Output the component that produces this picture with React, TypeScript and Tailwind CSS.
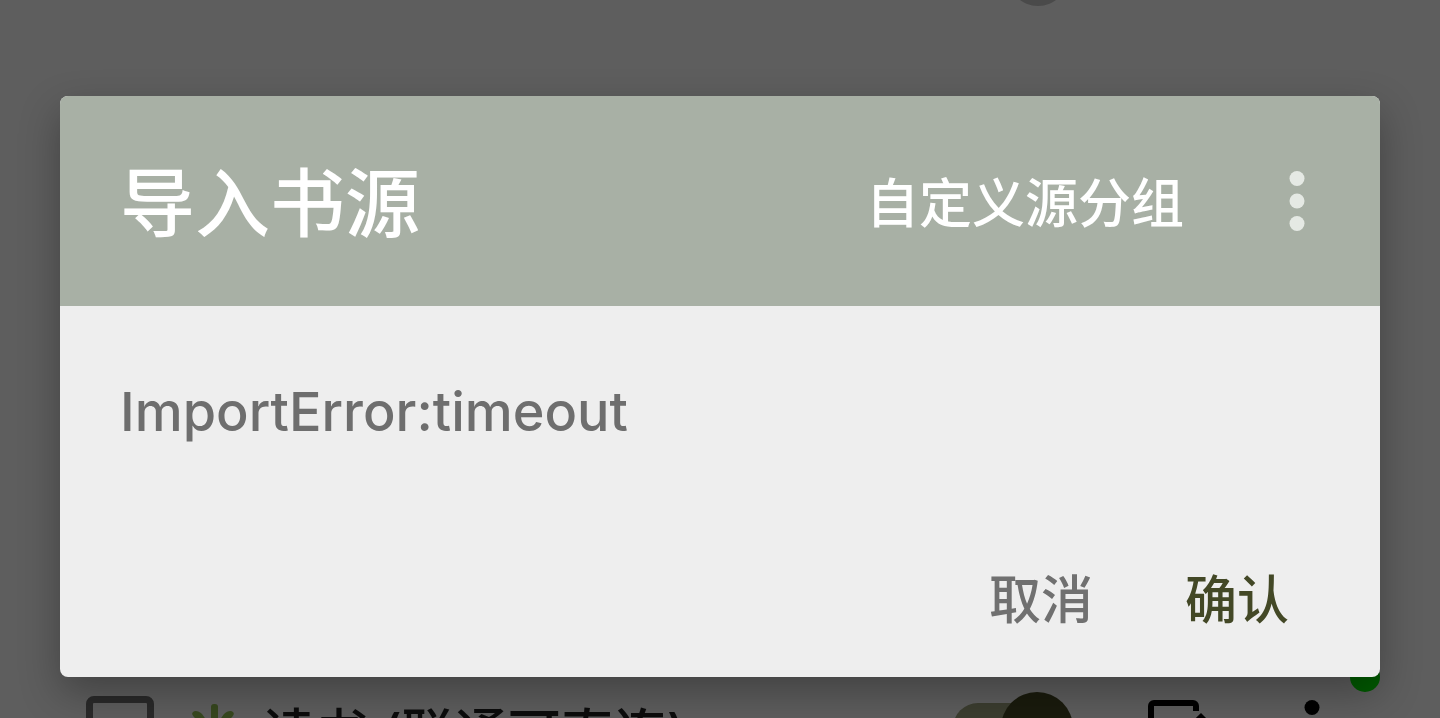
import React, { useState } from 'react';

const SproutIcon = () => (
  <svg width="48" height="48" viewBox="0 0 48 48" fill="#37481f" aria-hidden="true">
    <rect x="21" y="0" width="7" height="30" rx="3" />
    <path d="M3 8c2-2 6-1 9 2l10 14-3 3L5 14C3 12 1 10 3 8z" />
    <path d="M43 8c-2-2-6-1-9 2L24 24l3 3 14-13c2-2 4-4 2-6z" />
  </svg>
);

const EditIcon = () => (
  <svg width="60" height="60" viewBox="0 0 60 60" fill="none" aria-hidden="true">
    <path d="M48 11V6a3 3 0 0 0-3-3H6a3 3 0 0 0-3 3v48a3 3 0 0 0 3 3h39" stroke="#000" strokeWidth="6" />
    <path d="M53 13l6 6-28 28h-7v-6z" fill="#000" />
  </svg>
);

const MoreIcon = () => (
  <svg width="16" height="60" viewBox="0 0 16 60" fill="currentColor" aria-hidden="true">
    <circle cx="8" cy="7.5" r="7.5" />
    <circle cx="8" cy="30" r="7.5" />
    <circle cx="8" cy="52.5" r="7.5" />
  </svg>
);

const SourceRow = () => {
  const [selected, setSelected] = useState(false);
  const [enabled, setEnabled] = useState(true);

  return (
    <div className="relative flex h-14 shrink-0 items-start overflow-hidden pl-[86px] pr-[120px] pt-[30px]">
      <span className="absolute right-[60px] top-0 size-[30px] rounded-full bg-[#005a00]" />
      <input
        id="source"
        type="checkbox"
        checked={selected}
        onChange={() => setSelected(!selected)}
        className="mt-1 size-[68px] shrink-0 appearance-none rounded-lg border-[7px] border-[#2a2a2a]"
      />
      <label
        htmlFor="source"
        className="flex flex-1 items-start whitespace-pre pl-9 pt-1 text-[53px] font-medium leading-[76px] text-[#0c0c0c]"
      >
        <span className="mr-6 mt-2">
          <SproutIcon />
        </span>
        读书 (联通可直连)
      </label>
      <label className="relative mt-[11px] block h-[50px] w-[120px] shrink-0 rounded-full bg-[#3c3e30]">
        <input
          type="checkbox"
          role="switch"
          aria-label="启用"
          checked={enabled}
          onChange={() => setEnabled(!enabled)}
          className="absolute -top-[11px] right-0 size-[72px] appearance-none rounded-full bg-[#1a1b0d]"
        />
      </label>
      <button aria-label="编辑" className="ml-[75px] mt-2">
        <EditIcon />
      </button>
      <button aria-label="更多" className="ml-24 mt-2 text-black">
        <MoreIcon />
      </button>
    </div>
  );
};

const ImportDialog = () => (
  <div
    role="dialog"
    aria-labelledby="dialog-title"
    className="overflow-hidden rounded-lg bg-[#eeeeee] shadow-[0_16px_40px_rgba(0,0,0,0.3)]"
  >
    <header className="flex h-[210px] items-center bg-[#a8b0a5] pl-[60px] pr-[75px] text-white">
      <h1 id="dialog-title" className="flex-1 pt-1.5 text-[75px] font-medium leading-[108px]">
        导入书源
      </h1>
      <button className="pt-1.5 text-[53px] font-medium leading-[76px]">自定义源分组</button>
      <button aria-label="更多选项" className="ml-[105px] text-[#e5e9e4]">
        <MoreIcon />
      </button>
    </header>
    <p className="px-[60px] pt-[68px] text-[54px] font-medium leading-[76px] text-[#6e6e6e]">ImportError:timeout</p>
    <footer className="flex justify-end gap-[92px] pb-[38px] pl-[60px] pr-[91px] pt-[113px] text-[52px] font-medium leading-[76px]">
      <button className="text-[#707070]">取消</button>
      <button className="text-[#434826]">确认</button>
    </footer>
  </div>
);

const App = () => {
  return (
    <div className="relative h-screen overflow-hidden bg-[#5e5e5e] font-['Inter','Noto_Sans_CJK_SC',sans-serif]">
      <main className="flex h-full flex-col justify-between">
        <div className="flex h-1.5 items-end justify-end overflow-hidden pr-[372px]">
          <span className="size-[60px] shrink-0 rounded-full bg-[#4a4a4a]" />
        </div>
        <SourceRow />
      </main>
      <div className="absolute inset-x-0 top-0 px-[60px] pt-24">
        <ImportDialog />
      </div>
    </div>
  );
};

export default App;
